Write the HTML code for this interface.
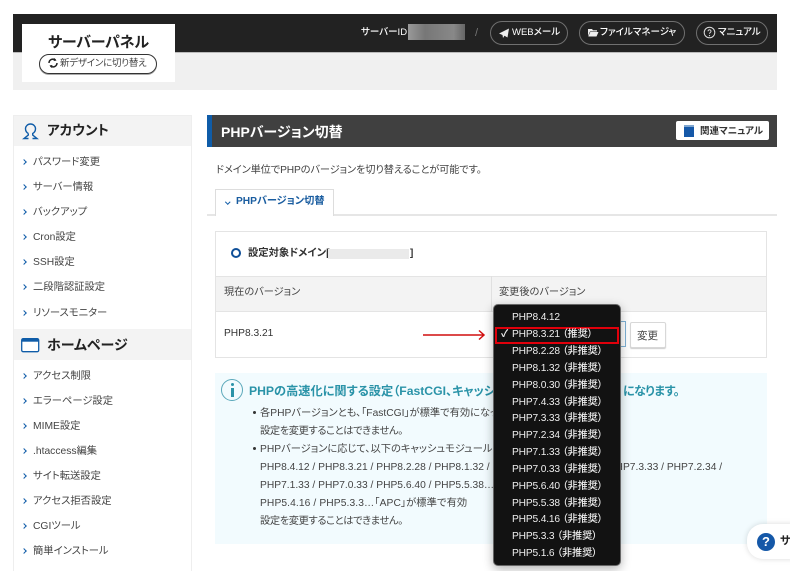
<!DOCTYPE html>
<html lang="ja"><head><meta charset="utf-8"><title>PHPバージョン切替</title>
<style>
html,body{margin:0;padding:0;background:#fff}
#p{position:relative;width:790px;height:571px;overflow:hidden;font-family:"Liberation Sans","Noto Sans CJK JP",sans-serif;color:#333;font-size:10px}
#p div,#p span.t,#p svg{position:absolute}
.t{white-space:nowrap;line-height:16px;height:16px;font-feature-settings:"palt"}
.s{font-size:10.3px;color:#444;left:33px}
.c{position:absolute;left:22px;width:3px;height:3px;border-top:1.7px solid #0f5ca8;border-right:1.7px solid #0f5ca8;transform:rotate(45deg)}
.o{color:#eee;font-size:10.2px;left:512px;font-weight:500;letter-spacing:-.15px}
.l{font-size:10.25px;color:#444;left:260px}
.b{border:1px solid #707070;border-radius:12px;height:24px;top:21px;box-sizing:border-box}
.h{color:#fff;font-size:9.5px;font-weight:500;top:25px}
</style></head><body><div id="p">
<div style="left:13px;top:14px;width:764px;height:38px;background:#222"></div>
<div style="left:13px;top:52px;width:764px;height:38px;background:#f0f0f0;border-top:1px solid #bbb;box-sizing:border-box"></div>
<div style="left:22px;top:24px;width:153px;height:58px;background:#fff"></div>
<span class="t" style="left:48px;top:35px;font-size:15px;font-weight:700;color:#222;letter-spacing:-.2px">サーバーパネル</span>
<div style="left:39px;top:54px;width:118px;height:20px;border:1px solid #333;border-radius:10px;box-sizing:border-box;box-shadow:0 1px 0 #aaa"></div>
<svg style="left:47px;top:57px" width="12" height="12" viewBox="0 0 12 12" fill="none" stroke="#222" stroke-width="1.5"><path d="M2 6a4 4 0 0 1 6.500-3M10 6a4 4 0 0 1-6.500 3"/><path d="M7.500 1l2 2.600-3 .4zM4.500 11l-2-2.600 3-.4z" fill="#222" stroke="none"/></svg>
<span class="t" style="left:60px;top:56px;font-size:9.5px;letter-spacing:-.25px;color:#444">新デザインに切り替え</span>

<span class="t h" style="left:361px">サーバーID</span>
<div style="left:408px;top:24px;width:57px;height:16px;background:linear-gradient(90deg,#999,#777 30%,#888 80%,#666)"></div>
<span class="t" style="left:475px;top:25px;color:#777;font-size:11px">/</span>
<div class="b" style="left:490px;width:78px"></div>
<svg style="left:498px;top:27px" width="12" height="12" viewBox="0 0 12 12"><path d="M1 6.500L11 1.500 9.500 10.500 6.500 8.800 5 11 4.500 8z" fill="#eee"/></svg>
<span class="t h" style="left:512px">WEBメール</span>
<div class="b" style="left:579px;width:106px"></div>
<svg style="left:587px;top:27px" width="12" height="11" viewBox="0 0 12 11"><path d="M1 2h4l1 1.300h4v1.200H3L1 9zM3.300 5H11.500L9.500 9.500H1.300z" fill="#eee"/></svg>
<span class="t h" style="left:600px">ファイルマネージャ</span>
<div class="b" style="left:696px;width:72px"></div>
<svg style="left:703px;top:26px" width="13" height="13" viewBox="0 0 13 13" fill="none"><circle cx="6.500" cy="6.500" r="5.300" stroke="#ddd"/><path d="M5 5.200a1.500 1.500 0 1 1 2.300 1.300c-.6.400-.8.700-.8 1.300" stroke="#ddd"/><circle cx="6.500" cy="9.600" r=".6" fill="#ddd"/></svg>
<span class="t h" style="left:718px">マニュアル</span>

<div style="left:13px;top:115px;width:179px;height:470px;border:1px solid #eee;box-sizing:border-box"></div>
<div style="left:14px;top:116px;width:177px;height:30px;background:#f3f3f3"></div>
<svg style="left:22px;top:123px" width="17" height="17" viewBox="0 0 17 17" fill="none" stroke="#0f5ca8" stroke-width="1.400"><path d="M6.300 10.500C4.500 9.500 3.500 7.500 3.500 5.800 3.500 3 5.800 1 8.500 1s5 2 5 4.800c0 1.700-1 3.700-2.800 4.700v1.500l4.300 3.500H10.500M6.300 10.500V12L2 15.500h4.500"/></svg>
<span class="t" style="left:47px;top:123px;font-size:13.6px;font-weight:700;color:#222">アカウント</span>

<i class="c" style="top:160px"></i><span class="t s" style="top:155px">パスワード変更</span>
<i class="c" style="top:185px"></i><span class="t s" style="top:180px">サーバー情報</span>
<i class="c" style="top:210px"></i><span class="t s" style="top:205px">バックアップ</span>
<i class="c" style="top:235px"></i><span class="t s" style="top:230px">Cron設定</span>
<i class="c" style="top:260px"></i><span class="t s" style="top:255px">SSH設定</span>
<i class="c" style="top:285px"></i><span class="t s" style="top:280px">二段階認証設定</span>
<i class="c" style="top:311px"></i><span class="t s" style="top:306px">リソースモニター</span>

<div style="left:14px;top:329px;width:177px;height:31px;background:#f3f3f3"></div>
<svg style="left:21px;top:338px" width="19" height="15" viewBox="0 0 19 15" fill="none"><rect x=".7" y=".7" width="17" height="13" rx="1.500" stroke="#0f5ca8" stroke-width="1.300" fill="#fff"/><rect x=".7" y=".7" width="17" height="3" fill="#0f5ca8"/></svg>
<span class="t" style="left:47px;top:337px;font-size:14px;font-weight:700;color:#222">ホームページ</span>

<i class="c" style="top:374px"></i><span class="t s" style="top:369px">アクセス制限</span>
<i class="c" style="top:399px"></i><span class="t s" style="top:394px">エラーページ設定</span>
<i class="c" style="top:424px"></i><span class="t s" style="top:419px">MIME設定</span>
<i class="c" style="top:449px"></i><span class="t s" style="top:444px">.htaccess編集</span>
<i class="c" style="top:474px"></i><span class="t s" style="top:469px">サイト転送設定</span>
<i class="c" style="top:499px"></i><span class="t s" style="top:494px">アクセス拒否設定</span>
<i class="c" style="top:524px"></i><span class="t s" style="top:519px">CGIツール</span>
<i class="c" style="top:549px"></i><span class="t s" style="top:544px">簡単インストール</span>

<div style="left:207px;top:115px;width:570px;height:32px;background:#404040"></div>
<div style="left:207px;top:115px;width:5px;height:32px;background:#0f5ca8"></div>
<span class="t" style="left:221px;top:124px;font-size:14px;font-weight:700;color:#fff">PHPバージョン切替</span>
<div style="left:676px;top:121px;width:93px;height:19px;background:#fff;border-radius:2px"></div>
<svg style="left:684px;top:125px" width="11" height="12" viewBox="0 0 11 12"><rect width="10" height="12" fill="#1558a8"/><rect width="10" height="2" fill="#7fa6d0"/></svg>
<span class="t" style="left:700px;top:124px;font-size:9.5px;font-weight:700;color:#333">関連マニュアル</span>

<span class="t" style="left:216px;top:163px;font-size:10.2px;letter-spacing:-.1px;color:#444">ドメイン単位でPHPのバージョンを切り替えることが可能です。</span>

<div style="left:207px;top:214px;width:570px;height:2px;background:#e6e6e6"></div>
<div style="left:215px;top:189px;width:119px;height:27px;background:#fff;border:1px solid #ddd;border-bottom:0;box-sizing:border-box"></div>
<i style="position:absolute;left:226px;top:200px;width:2.5px;height:2.5px;border-right:1.7px solid #0f5ca8;border-bottom:1.7px solid #0f5ca8;transform:rotate(45deg)"></i>
<span class="t" style="left:236px;top:194px;font-size:10.2px;font-weight:700;color:#1a5da0">PHPバージョン切替</span>

<div style="left:215px;top:231px;width:552px;height:127px;border:1px solid #e4e4e4;box-sizing:border-box"></div>
<div style="left:231px;top:248px;width:10px;height:10px;border:2.500px solid #0f4f98;border-radius:50%;box-sizing:border-box"></div>
<span class="t" style="left:248px;top:246px;font-size:10.3px;font-weight:700;color:#333">設定対象ドメイン[</span>
<div style="left:328px;top:249px;width:81px;height:10px;background:#eaeaea"></div>
<span class="t" style="left:410px;top:246px;font-size:10px;font-weight:700;color:#333">]</span>
<div style="left:216px;top:276px;width:550px;height:36px;background:#f3f3f3;border-top:1px solid #e4e4e4;border-bottom:1px solid #e4e4e4;box-sizing:border-box"></div>
<div style="left:491px;top:276px;width:1px;height:36px;background:#e0e0e0"></div>
<span class="t" style="left:224px;top:285px;font-size:10.2px;color:#444">現在のバージョン</span>
<span class="t" style="left:499px;top:285px;font-size:10.2px;color:#444">変更後のバージョン</span>
<span class="t" style="left:224px;top:326px;font-size:10.2px;color:#333">PHP8.3.21</span>
<svg style="left:422px;top:329px" width="64" height="12" viewBox="0 0 64 12" fill="none" stroke="#d10f0f" stroke-width="1.500"><path d="M1 6h61M57 1.500L62 6l-5 4.500"/></svg>

<div style="left:600px;top:321px;width:26px;height:26px;border:1px solid #7fb2d6;box-sizing:border-box;background:#fff"></div>
<div style="left:630px;top:322px;width:36px;height:26px;border:1px solid #d8d8d8;border-radius:2px;box-sizing:border-box;background:#fff;box-shadow:0 1px 1px #ccc"></div>
<span class="t" style="left:637px;top:328px;font-size:10.5px;color:#444">変更</span>

<div style="left:215px;top:373px;width:552px;height:171px;background:#f2fbfe"></div>
<div style="left:221px;top:379px;width:22px;height:22px;border:1.200px solid #5aa8ba;border-radius:50%;box-sizing:border-box"></div>
<div style="left:231px;top:383px;width:3px;height:3px;background:#2a93a8;border-radius:50%"></div>
<div style="left:231px;top:388px;width:3px;height:9px;background:#2a93a8"></div>
<span class="t" style="left:249px;top:383px;font-size:12.2px;font-weight:700;color:#2a93a8">PHPの高速化に関する設定（FastCGI、キャッシュモジュール</span>
<span class="t" style="left:623px;top:383px;font-size:12px;letter-spacing:-.5px;font-weight:700;color:#2a93a8">になります。</span>

<div style="left:253px;top:411px;width:3px;height:3px;background:#333;border-radius:50%"></div>
<span class="t l" style="top:406px">各PHPバージョンとも、「FastCGI」が標準で有効になっています。</span>
<span class="t l" style="top:424px;letter-spacing:-.4px">設定を変更することはできません。</span>
<div style="left:253px;top:447px;width:3px;height:3px;background:#333;border-radius:50%"></div>
<span class="t l" style="top:442px">PHPバージョンに応じて、以下のキャッシュモジュールが有効です。</span>
<span class="t l" style="top:460px">PHP8.4.12 / PHP8.3.21 / PHP8.2.28 / PHP8.1.32 / PHP8.0.30 / PHP7.4.33 / PHP7.3.33 / PHP7.2.34 /</span>
<span class="t l" style="top:478px">PHP7.1.33 / PHP7.0.33 / PHP5.6.40 / PHP5.5.38…</span>
<span class="t l" style="top:496px;letter-spacing:.1px">PHP5.4.16 / PHP5.3.3…「APC」が標準で有効</span>
<span class="t l" style="top:514px;letter-spacing:-.4px">設定を変更することはできません。</span>

<div style="left:747px;top:524px;width:60px;height:35px;background:#fff;border-radius:16px;box-shadow:0 0 6px rgba(0,0,0,.15)"></div>
<div style="left:757px;top:533px;width:18px;height:18px;background:#1558a8;border-radius:50%;color:#fff;font-weight:700;font-size:13px;line-height:18px;text-align:center">?</div>
<span class="t" style="left:780px;top:533px;font-size:11px;font-weight:700;color:#222">サ</span>

<div style="left:493px;top:304px;width:128px;height:262px;background:#121212;border:1.500px solid #666;border-radius:5px;box-sizing:border-box;box-shadow:0 3px 10px rgba(0,0,0,.3)"></div>
<div style="left:495px;top:327px;width:124px;height:17px;border:2px solid #e0000b;box-sizing:border-box"></div>
<span class="t" style="left:501px;top:327px;font-size:10px;font-weight:700;color:#eee">✓</span>
<span class="t o" style="top:310px">PHP8.4.12</span>
<span class="t o" style="top:327px">PHP8.3.21 （推奨）</span>
<span class="t o" style="top:344px">PHP8.2.28 （非推奨）</span>
<span class="t o" style="top:361px">PHP8.1.32 （非推奨）</span>
<span class="t o" style="top:378px">PHP8.0.30 （非推奨）</span>
<span class="t o" style="top:395px">PHP7.4.33 （非推奨）</span>
<span class="t o" style="top:411px">PHP7.3.33 （非推奨）</span>
<span class="t o" style="top:428px">PHP7.2.34 （非推奨）</span>
<span class="t o" style="top:445px">PHP7.1.33 （非推奨）</span>
<span class="t o" style="top:462px">PHP7.0.33 （非推奨）</span>
<span class="t o" style="top:479px">PHP5.6.40 （非推奨）</span>
<span class="t o" style="top:496px">PHP5.5.38 （非推奨）</span>
<span class="t o" style="top:512px">PHP5.4.16 （非推奨）</span>
<span class="t o" style="top:529px">PHP5.3.3 （非推奨）</span>
<span class="t o" style="top:546px">PHP5.1.6 （非推奨）</span>
</div></body></html>
